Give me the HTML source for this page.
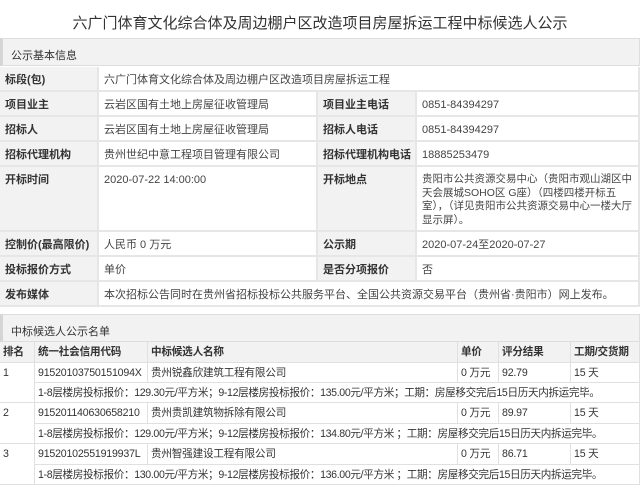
<!DOCTYPE html>
<html><head><meta charset="utf-8"><style>
*{margin:0;padding:0;box-sizing:border-box}
body{width:640px;height:487px;background:#fff;font-family:"Liberation Sans","Noto Sans CJK SC",sans-serif;font-size:11px;color:#333;position:relative;overflow:hidden}
.a{position:absolute;white-space:nowrap}
.t{left:0;width:640px;top:12px;text-align:center;font-size:15px;color:#333}
.hd{position:absolute;left:0;width:640px;height:28px;background:#f2f2f2;border:1px solid #ddd;border-left:3px solid #d5d5d5;padding:8px 0 0 8px;font-size:11px}
.c{position:absolute;border-right:2px solid #e6e6e6;border-bottom:2px solid #e6e6e6;padding:6px 0 0 5px;line-height:14px}
.l{background:#f2f2f2;font-weight:bold;color:#333}
.v{background:#fff;color:#444}
.s{position:absolute;border-right:1px solid #e0e0e0;border-bottom:1px solid #e0e0e0;padding:3px 0 0 3px;line-height:14px;white-space:nowrap;overflow:hidden;font-size:10.6px;letter-spacing:-0.2px}
.d{letter-spacing:-0.35px}
.h{background:#f2f2f2;font-weight:bold}
</style></head><body>
<div class="a t">六广门体育文化综合体及周边棚户区改造项目房屋拆运工程中标候选人公示</div>
<div class="hd" style="top:38px">公示基本信息</div>

<div class="c l" style="left:0;top:67px;width:99px;height:25px">标段(包)</div>
<div class="c v" style="left:99px;top:67px;width:541px;height:25px">六广门体育文化综合体及周边棚户区改造项目房屋拆运工程</div>

<div class="c l" style="left:0;top:92px;width:99px;height:25px">项目业主</div>
<div class="c v" style="left:99px;top:92px;width:219px;height:25px">云岩区国有土地上房屋征收管理局</div>
<div class="c l" style="left:318px;top:92px;width:99px;height:25px">项目业主电话</div>
<div class="c v" style="left:417px;top:92px;width:223px;height:25px">0851-84394297</div>

<div class="c l" style="left:0;top:117px;width:99px;height:25px">招标人</div>
<div class="c v" style="left:99px;top:117px;width:219px;height:25px">云岩区国有土地上房屋征收管理局</div>
<div class="c l" style="left:318px;top:117px;width:99px;height:25px">招标人电话</div>
<div class="c v" style="left:417px;top:117px;width:223px;height:25px">0851-84394297</div>

<div class="c l" style="left:0;top:142px;width:99px;height:25px">招标代理机构</div>
<div class="c v" style="left:99px;top:142px;width:219px;height:25px">贵州世纪中意工程项目管理有限公司</div>
<div class="c l" style="left:318px;top:142px;width:99px;height:25px">招标代理机构电话</div>
<div class="c v" style="left:417px;top:142px;width:223px;height:25px">18885253479</div>

<div class="c l" style="left:0;top:167px;width:99px;height:65px">开标时间</div>
<div class="c v" style="left:99px;top:167px;width:219px;height:65px">2020-07-22 14:00:00</div>
<div class="c l" style="left:318px;top:167px;width:99px;height:65px">开标地点</div>
<div class="c v" style="left:417px;top:167px;width:223px;height:65px;white-space:normal;padding-right:2px;font-size:10.5px;line-height:13.5px">贵阳市公共资源交易中心（贵阳市观山湖区中天会展城SOHO区 G座）（四楼四楼开标五室），（详见贵阳市公共资源交易中心一楼大厅显示屏）。</div>

<div class="c l" style="left:0;top:232px;width:99px;height:25px">控制价(最高限价)</div>
<div class="c v" style="left:99px;top:232px;width:219px;height:25px">人民币 0 万元</div>
<div class="c l" style="left:318px;top:232px;width:99px;height:25px">公示期</div>
<div class="c v" style="left:417px;top:232px;width:223px;height:25px">2020-07-24至2020-07-27</div>

<div class="c l" style="left:0;top:257px;width:99px;height:25px">投标报价方式</div>
<div class="c v" style="left:99px;top:257px;width:219px;height:25px">单价</div>
<div class="c l" style="left:318px;top:257px;width:99px;height:25px">是否分项报价</div>
<div class="c v" style="left:417px;top:257px;width:223px;height:25px">否</div>

<div class="c l" style="left:0;top:282px;width:99px;height:25px">发布媒体</div>
<div class="c v" style="left:99px;top:282px;width:541px;height:25px">本次招标公告同时在贵州省招标投标公共服务平台、全国公共资源交易平台（贵州省·贵阳市）网上发布。</div>

<div class="hd" style="top:314px">中标候选人公示名单</div>

<div class="s h" style="left:0;top:342px;width:35px;height:21px">排名</div>
<div class="s h" style="left:35px;top:342px;width:113px;height:21px">统一社会信用代码</div>
<div class="s h" style="left:148px;top:342px;width:310px;height:21px">中标候选人名称</div>
<div class="s h" style="left:458px;top:342px;width:41px;height:21px">单价</div>
<div class="s h" style="left:499px;top:342px;width:72px;height:21px">评分结果</div>
<div class="s h" style="left:571px;top:342px;width:69px;height:21px">工期/交货期</div>

<div class="s" style="left:0;top:363px;width:35px;height:40px">1</div>
<div class="s" style="left:35px;top:363px;width:113px;height:20px">91520103750151094X</div>
<div class="s" style="left:148px;top:363px;width:310px;height:20px">贵州锐鑫欣建筑工程有限公司</div>
<div class="s" style="left:458px;top:363px;width:41px;height:20px">0 万元</div>
<div class="s" style="left:499px;top:363px;width:72px;height:20px">92.79</div>
<div class="s" style="left:571px;top:363px;width:69px;height:20px">15 天</div>
<div class="s d" style="left:35px;top:383px;width:605px;height:20px">1-8层楼房投标报价：129.30元/平方米；9-12层楼房投标报价：135.00元/平方米；工期：房屋移交完后15日历天内拆运完毕。</div>

<div class="s" style="left:0;top:403px;width:35px;height:41px">2</div>
<div class="s" style="left:35px;top:403px;width:113px;height:21px">915201140630658210</div>
<div class="s" style="left:148px;top:403px;width:310px;height:21px">贵州贵凯建筑物拆除有限公司</div>
<div class="s" style="left:458px;top:403px;width:41px;height:21px">0 万元</div>
<div class="s" style="left:499px;top:403px;width:72px;height:21px">89.97</div>
<div class="s" style="left:571px;top:403px;width:69px;height:21px">15 天</div>
<div class="s d" style="left:35px;top:424px;width:605px;height:20px">1-8层楼房投标报价：129.00元/平方米；9-12层楼房投标报价：134.80元/平方米 ；工期：房屋移交完后15日历天内拆运完毕。</div>

<div class="s" style="left:0;top:444px;width:35px;height:41px">3</div>
<div class="s" style="left:35px;top:444px;width:113px;height:21px">91520102551919937L</div>
<div class="s" style="left:148px;top:444px;width:310px;height:21px">贵州智强建设工程有限公司</div>
<div class="s" style="left:458px;top:444px;width:41px;height:21px">0 万元</div>
<div class="s" style="left:499px;top:444px;width:72px;height:21px">86.71</div>
<div class="s" style="left:571px;top:444px;width:69px;height:21px">15 天</div>
<div class="s d" style="left:35px;top:465px;width:605px;height:20px">1-8层楼房投标报价：130.00元/平方米；9-12层楼房投标报价：136.00元/平方米 ；工期：房屋移交完后15日历天内拆运完毕。</div>
</body></html>
